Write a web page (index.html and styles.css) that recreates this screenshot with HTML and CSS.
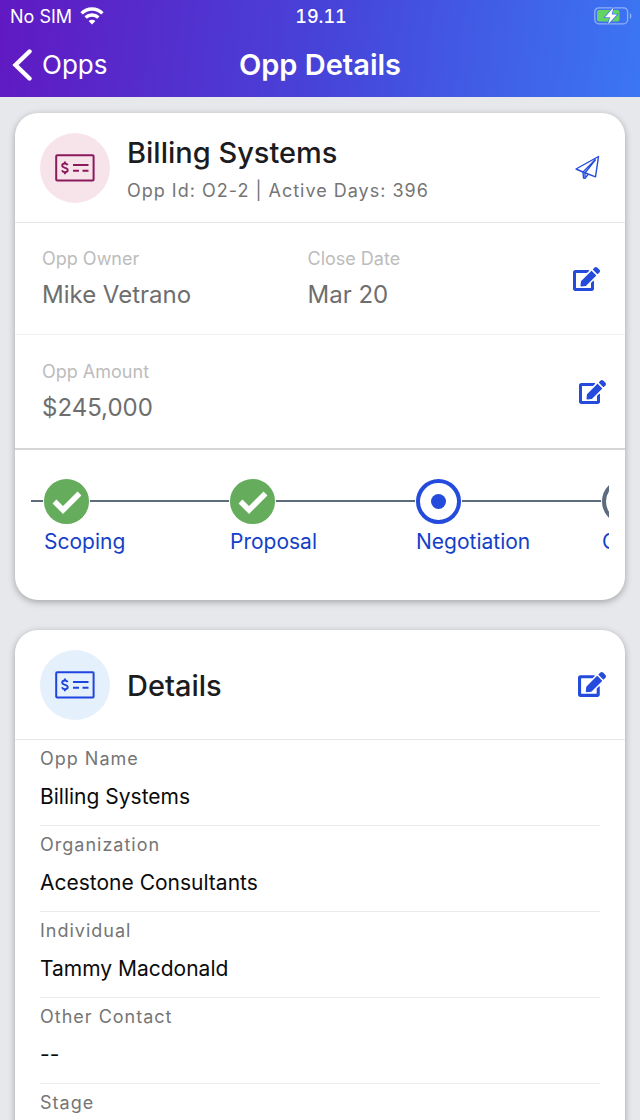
FILE: index.html
```html
<!DOCTYPE html>
<html lang="en">
<head>
  <meta charset="UTF-8" />
  <meta name="viewport" content="width=device-width, initial-scale=1.0" />
  <title>Opp Details</title>
  <link rel="stylesheet" href="styles.css">
</head>
<body>
  <!-- shared icons -->
  <svg class="sprite" aria-hidden="true">
    <symbol id="icon-edit" viewBox="0 0 576 512">
      <path d="M402.600 83.200l90.200 90.200c3.800 3.800 3.800 10 0 13.800L274.400 405.600l-92.800 10.300c-12.400 1.400-22.900-9.100-21.500-21.500l10.300-92.800L388.800 83.200c3.800-3.800 10-3.800 13.800 0zm162-22.900l-48.800-48.800c-15.200-15.200-39.900-15.200-55.200 0l-35.400 35.400c-3.800 3.800-3.800 10 0 13.800l90.200 90.200c3.800 3.800 10 3.800 13.800 0l35.400-35.400c15.200-15.300 15.200-40 0-55.200zM384 346.200V448H64V128h229.800c3.200 0 6.200-1.300 8.500-3.500l40-40c7.600-7.600 2.200-20.500-8.500-20.500H48C21.500 64 0 85.500 0 112v352c0 26.500 21.500 48 48 48h352c26.500 0 48-21.500 48-48V306.200c0-10.700-12.900-16-20.500-8.500l-40 40c-2.200 2.300-3.500 5.300-3.500 8.500z"/>
    </symbol>
    <symbol id="icon-check" viewBox="0 0 40 28">
      <g fill="none" stroke="currentColor">
        <rect x="1.200" y="1.200" width="37.400" height="25.200" rx="1" stroke-width="2"/>
        <path d="M18 11h15.500M18 16.800h6M27.500 16.800h6" stroke-width="2"/>
        <path d="M12.600 11.200c-.5-1.200-1.500-1.700-2.700-1.700-1.500 0-2.700.8-2.700 2.100 0 3 5.500 1.400 5.500 4.400 0 1.400-1.200 2.200-2.800 2.200-1.400 0-2.500-.6-2.900-1.900M9.900 7.500v2M9.900 18.200v2" stroke-width="1.900"/>
      </g>
    </symbol>
    <symbol id="icon-tick" viewBox="0 0 30 24">
      <path d="M2.500 11.500L11 20 27.500 3.500" fill="none" stroke="currentColor" stroke-width="5.500"/>
    </symbol>
  </svg>

  <header class="top-bar">
    <div class="status">
      <div class="carrier">
        <span>No SIM</span>
        <svg width="24" height="18" viewBox="0 0 24 18" fill="none" stroke="#fff" stroke-width="3.400">
          <path d="M1.600 6.400C7.300.6 16.700.6 22.400 6.400"/>
          <path d="M5.600 10.600c3.600-3.400 9.200-3.400 12.800 0"/>
          <path d="M12 17.500l-3.400-3.600c2-1.700 4.800-1.700 6.800 0z" fill="#fff" stroke="none"/>
        </svg>
      </div>
      <time>19.11</time>
      <svg class="battery" width="38" height="18" viewBox="0 0 38 18">
        <rect x=".8" y=".8" width="32.800" height="16" rx="4" fill="none" stroke="#8fb0f8" stroke-width="1.300"/>
        <path d="M35.800 6v6c2.200-.8 2.200-5.200 0-6z" fill="#8fb0f8"/>
        <rect x="3" y="3" width="22.500" height="11.600" rx="2" fill="#64d264"/>
        <path d="M19.500.5l-8.500 9.800h5.200l-2.200 7 9-9.800h-5.400z" fill="#fff" stroke="#4279ee" stroke-width="1.600" paint-order="stroke"/>
      </svg>
    </div>
    <nav class="nav">
      <button class="back" type="button">
        <svg width="20" height="32" viewBox="0 0 20 32" fill="none" stroke="#fff" stroke-width="4.400" stroke-linecap="round" stroke-linejoin="miter">
          <path d="M17.500 2.500L3.500 16l14 13.500"/>
        </svg>
        <span>Opps</span>
      </button>
      <h1>Opp Details</h1>
    </nav>
  </header>

  <main class="content">
    <section class="card">
      <div class="card-head inset">
        <div class="badge badge-pink"><svg width="40" height="28"><use href="#icon-check"/></svg></div>
        <div class="heading">
          <h2>Billing Systems</h2>
          <p>Opp Id: O2-2 | Active Days: 396</p>
        </div>
        <button class="icon-btn" type="button" aria-label="Send">
          <svg width="25" height="25" viewBox="0 0 25 25" fill="none" stroke="currentColor" stroke-width="1.400" stroke-linejoin="round">
            <path d="M23.500 1.500L1 14 8 17 20.500 21.800z"/>
            <path d="M20.500 4.500L8 17l.5 6 1.500.2 3.200-4"/>
            <path d="M20.500 4.500L10 18v4.500"/>
          </svg>
        </button>
      </div>

      <div class="row inset">
        <div class="pair">
          <span class="label">Opp Owner</span>
          <span class="value">Mike Vetrano</span>
        </div>
        <div class="pair">
          <span class="label">Close Date</span>
          <span class="value">Mar 20</span>
        </div>
        <button class="icon-btn" type="button" aria-label="Edit owner"><svg width="27" height="24"><use href="#icon-edit"/></svg></button>
      </div>

      <div class="row row-last">
        <div class="pair">
          <span class="label">Opp Amount</span>
          <span class="value">$245,000</span>
        </div>
        <button class="icon-btn" type="button" aria-label="Edit amount"><svg width="27" height="24"><use href="#icon-edit"/></svg></button>
      </div>

      <div class="stages">
        <ol class="steps">
          <li class="step">
            <span class="dot done"><svg width="30" height="24"><use href="#icon-tick"/></svg></span>
            <a href="#">Scoping</a>
          </li>
          <li class="step">
            <span class="dot done"><svg width="30" height="24"><use href="#icon-tick"/></svg></span>
            <a href="#">Proposal</a>
          </li>
          <li class="step">
            <span class="dot current"></span>
            <a href="#">Negotiation</a>
          </li>
          <li class="step">
            <span class="dot"></span>
            <a href="#">Closing</a>
          </li>
        </ol>
      </div>
    </section>

    <section class="card">
      <div class="card-head">
        <div class="badge badge-blue"><svg width="40" height="28"><use href="#icon-check"/></svg></div>
        <div class="heading">
          <h2>Details</h2>
        </div>
        <button class="icon-btn" type="button" aria-label="Edit details"><svg width="28" height="25"><use href="#icon-edit"/></svg></button>
      </div>
      <dl class="fields">
        <div class="field">
          <dt>Opp Name</dt>
          <dd>Billing Systems</dd>
        </div>
        <div class="field">
          <dt>Organization</dt>
          <dd>Acestone Consultants</dd>
        </div>
        <div class="field">
          <dt>Individual</dt>
          <dd>Tammy Macdonald</dd>
        </div>
        <div class="field">
          <dt>Other Contact</dt>
          <dd>--</dd>
        </div>
        <div class="field">
          <dt>Stage</dt>
          <dd></dd>
        </div>
      </dl>
    </section>
  </main>
</body>
</html>
```
FILE: styles.css
```css
* {
  box-sizing: border-box;
}

body {
  margin: 0;
  height: 100vh;
  display: flex;
  flex-direction: column;
  background: #e7e8ec;
  font-family: Inter, "Liberation Sans", sans-serif;
  color: #1c1c1e;
}

h1, h2, p, ol, dl, dd {
  margin: 0;
  padding: 0;
}

button {
  border: none;
  background: none;
  padding: 0;
  font: inherit;
  color: inherit;
  cursor: pointer;
}

svg {
  display: block;
}

.sprite {
  position: absolute;
  width: 0;
  height: 0;
}

/* top bar */
.top-bar {
  flex: none;
  background: linear-gradient(97deg, #6119c2 0%, #4743d8 50%, #3b76f3 100%);
  color: #fff;
}

.status {
  display: grid;
  grid-template-columns: 1fr auto 1fr;
  align-items: center;
  height: 32px;
  padding: 0 8px 0 10px;
  font-size: 18px;
}

.status time {
  font-weight: 500;
  font-variant-numeric: tabular-nums;
}

.carrier {
  display: flex;
  align-items: center;
  gap: 8px;
}

.battery {
  justify-self: end;
}

.nav {
  display: grid;
  grid-template-columns: 1fr auto 1fr;
  align-items: center;
  height: 65px;
  padding: 0 12px;
}

.nav h1 {
  font-size: 29px;
  font-weight: 600;
  line-height: 36px;
}

.back {
  display: flex;
  align-items: center;
  gap: 10px;
  font-size: 26px;
  line-height: 32px;
}

/* cards */
.content {
  flex: 1;
  min-height: 0;
  overflow-y: auto;
  scrollbar-width: none;
  padding: 16px 15px;
}

.card {
  margin-bottom: 30px;
  background: #fff;
  border-radius: 23px;
  box-shadow: 0 2px 7px rgba(0, 0, 0, 0.3);
}

.card-head {
  display: flex;
  align-items: center;
  height: 110px;
  padding: 0 19px 0 25px;
  border-bottom: 1px solid #e6e6e8;
}

.card-head.inset,
.row.inset {
  padding-right: 25px;
}

.badge {
  display: flex;
  align-items: center;
  justify-content: center;
  width: 70px;
  height: 70px;
  border-radius: 50%;
}

.badge-pink {
  background: #f7e4eb;
  color: #8a1a5b;
}

.badge-blue {
  background: #e4f0fb;
  color: #1f45e0;
}

.heading {
  flex: 1;
  padding: 2px 0 0 17px;
}

.heading h2 {
  font-size: 29px;
  font-weight: 500;
  line-height: 40px;
}

.heading p {
  font-size: 18px;
  line-height: 28px;
  padding-top: 4px;
  letter-spacing: 1px;
  color: #757575;
}

.icon-btn {
  color: #244bdc;
}

.icon-btn svg {
  fill: currentColor;
}

.icon-btn svg[fill="none"] {
  fill: none;
}

.row {
  display: flex;
  align-items: center;
  height: 112px;
  padding: 0 19px 0 27px;
  border-bottom: 1px solid #f0f0f2;
}

.row-last {
  height: 115px;
  border-bottom: 2px solid #d6d6d8;
}

.pair {
  flex: 1;
  display: flex;
  flex-direction: column;
  gap: 8px;
}

.label {
  font-size: 18px;
  line-height: 24px;
  color: #bcbcbc;
}

.value {
  font-size: 24px;
  line-height: 32px;
  color: #6e6e6e;
}

/* stage progress */
.stages {
  padding: 27px 16px 42px;
}

.steps {
  display: flex;
  overflow: hidden;
  list-style: none;
  padding: 2px 0 2px 13px;
  background: linear-gradient(#5d6b7e, #5d6b7e) 0 23px / 100% 2px no-repeat;
}

.step {
  flex: 0 0 186px;
}

.step a {
  display: block;
  padding-top: 4px;
  font-size: 21px;
  line-height: 28px;
  color: #153fc8;
  text-decoration: none;
}

.dot {
  display: flex;
  align-items: center;
  justify-content: center;
  width: 45px;
  height: 45px;
  border: 4px solid #5d6b7e;
  border-radius: 50%;
  background: #fff;
  box-shadow: 0 0 0 1px #fff;
}

.dot.done {
  border-color: #65ac5c;
  background: #65ac5c;
  color: #fff;
}

.dot.current {
  border-color: #244bdc;
}

.dot.current::after {
  content: "";
  width: 15px;
  height: 15px;
  border-radius: 50%;
  background: #244bdc;
}

/* detail fields */
.fields {
  padding: 0 25px;
}

.field {
  height: 86px;
  padding-top: 6px;
  border-bottom: 1px solid #ebebed;
}

.field dt {
  font-size: 18px;
  line-height: 26px;
  letter-spacing: 1px;
  color: #757575;
}

.field dd {
  padding-top: 10px;
  font-size: 21px;
  line-height: 30px;
  color: #0b0b0b;
}
```
